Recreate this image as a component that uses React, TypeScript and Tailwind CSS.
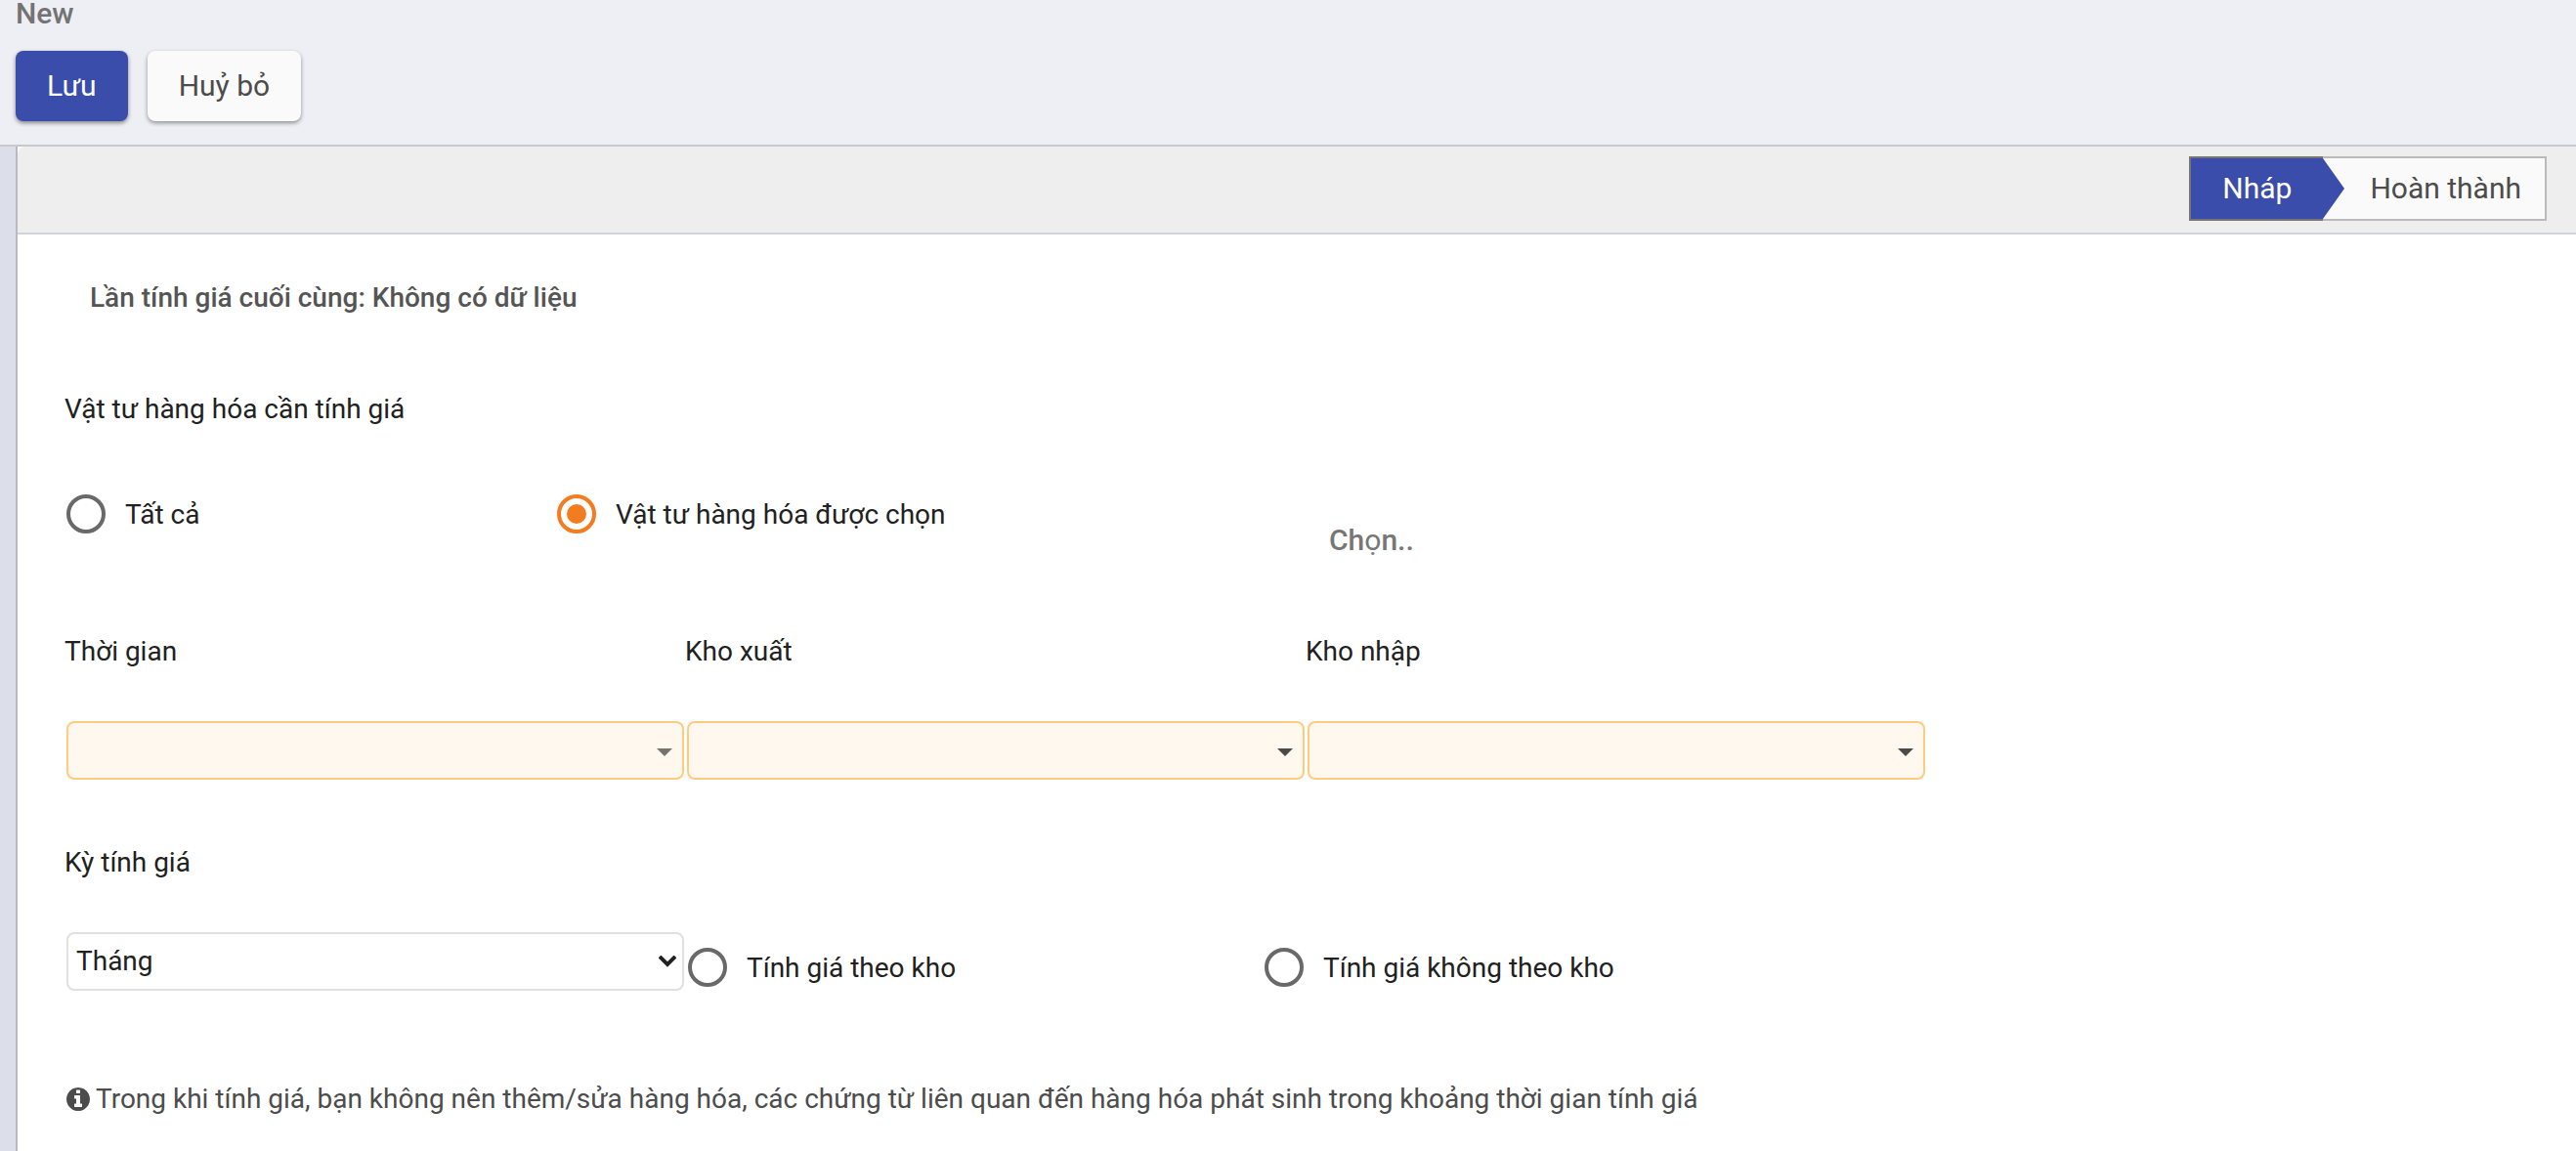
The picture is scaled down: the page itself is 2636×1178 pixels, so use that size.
import { useState } from "react";
import type { ReactNode } from "react";

type RadioProps = {
  name: string;
  label: string;
  checked: boolean;
  onSelect: () => void;
};

function Radio({ name, label, checked, onSelect }: RadioProps) {
  return (
    <label className="flex cursor-pointer items-center gap-5">
      <input
        type="radio"
        name={name}
        checked={checked}
        onChange={onSelect}
        className="grid size-10 shrink-0 appearance-none place-content-center rounded-full border-4 border-[#696969] before:size-5 before:rounded-full before:bg-transparent checked:border-[#f47c20] checked:before:bg-[#f47c20]"
      />
      <span className="pt-0.5">{label}</span>
    </label>
  );
}

type FieldProps = {
  id: string;
  label: string;
  children: ReactNode;
};

function Field({ id, label, children }: FieldProps) {
  return (
    <div>
      <label htmlFor={id} className="block">
        {label}
      </label>
      <div className="relative mt-[54px] mr-px ml-0.5">{children}</div>
    </div>
  );
}

function RequiredPicker({ id, label, muted }: { id: string; label: string; muted?: boolean }) {
  return (
    <Field id={id} label={label}>
      <input
        id={id}
        type="text"
        className="block h-15 w-full rounded-lg border-2 border-[#ffcb80] bg-[#fff8ee] pr-12 pl-2 outline-none"
      />
      <svg
        viewBox="0 0 16 8"
        aria-hidden="true"
        className={`pointer-events-none absolute right-3 bottom-6 h-2 w-4 ${muted ? "fill-[#77736e]" : "fill-[#4a4a48]"}`}
      >
        <path d="M0 0h16L8 8z" />
      </svg>
    </Field>
  );
}

function InfoIcon() {
  return (
    <svg viewBox="128 128 1536 1536" aria-hidden="true" className="size-6 shrink-0 fill-current">
      <path d="M1152 1376v-160q0-14-9-23t-23-9h-96v-512q0-14-9-23t-23-9h-320q-14 0-23 9t-9 23v160q0 14 9 23t23 9h96v320h-96q-14 0-23 9t-9 23v160q0 14 9 23t23 9h448q14 0 23-9t9-23zM1024 480v-160q0-14-9-23t-23-9h-192q-14 0-23 9t-9 23v160q0 14 9 23t23 9h192q14 0 23-9t9-23zM1664 896q0 209-103 385.500t-279.500 279.500-385.500 103-385.500-103-279.500-279.500-103-385.500 103-385.500 279.500-279.500 385.500-103 385.500 103 279.500 279.500 103 385.500z" />
    </svg>
  );
}

export default function App() {
  const [scope, setScope] = useState("selected");
  const [mode, setMode] = useState("");

  return (
    <div className="flex min-h-screen flex-col bg-[#dcdeea] font-['Roboto',sans-serif] text-[28px] leading-[34px] text-[#212121]">
      <header className="border-b-2 border-[#c8c9ce] bg-[#eeeff5] px-4 pb-6">
        <h1 className="text-[30px] leading-7 font-medium text-[#737373]">New</h1>
        <div className="mt-6 flex gap-5 text-[30px]">
          <button
            type="button"
            className="h-18 rounded-lg bg-[#3a4daa] px-8 text-white shadow-[0_2px_4px_rgba(0,0,0,0.45)]"
          >
            Lưu
          </button>
          <button
            type="button"
            className="h-18 rounded-lg bg-[#fafafa] px-8 text-[#4c4c4c] shadow-[0_2px_4px_rgba(0,0,0,0.4)]"
          >
            Huỷ bỏ
          </button>
        </div>
      </header>

      <main className="ml-4 grow border-l-2 border-[#b9b9c0] bg-white">
        <div className="flex justify-end rounded-tl-lg border-b-2 border-[#ced4da] bg-[#eeeeee] pt-2.5 pr-[30px] pb-3">
          <ol className="flex h-[66px] text-[30px]">
            <li
              aria-current="step"
              className="relative flex items-center border-y-2 border-l-2 border-[#757575] bg-[#3a4daa] px-8 text-white"
            >
              <span>Nháp</span>
              <svg
                viewBox="0 0 22 62"
                aria-hidden="true"
                className="absolute top-0 left-full h-full w-[22px] fill-[#3a4daa]"
              >
                <path d="M0 0l22 31L0 62z" />
              </svg>
            </li>
            <li className="flex items-center border-y-2 border-r-2 border-[#bababa] bg-[#fafafa] pr-6 pl-12 text-[#4c4c4c]">
              Hoàn thành
            </li>
          </ol>
        </div>

        <form className="pt-12 pr-[30px] pb-8 pl-12">
          <h2 className="pl-[26px] font-medium text-[#555555]">
            Lần tính giá cuối cùng: Không có dữ liệu
          </h2>

          <fieldset className="mt-20">
            <legend>Vật tư hàng hóa cần tính giá</legend>
            <div className="mt-[70px] flex items-start pl-0.5">
              <div className="w-[502px]">
                <Radio name="scope" label="Tất cả" checked={scope === "all"} onSelect={() => setScope("all")} />
              </div>
              <div className="w-[790px]">
                <Radio
                  name="scope"
                  label="Vật tư hàng hóa được chọn"
                  checked={scope === "selected"}
                  onSelect={() => setScope("selected")}
                />
              </div>
              <button type="button" className="mt-[30px] text-[30px] font-medium text-[#777777]">
                Ch<span className="font-normal">ọ</span>n..
              </button>
            </div>
          </fieldset>

          <div className="mt-20 grid grid-cols-4">
            <RequiredPicker id="period" label="Thời gian" muted />
            <RequiredPicker id="source" label="Kho xuất" />
            <RequiredPicker id="target" label="Kho nhập" />
          </div>

          <div className="mt-17 grid grid-cols-4">
            <Field id="cycle" label="Kỳ tính giá">
              <select
                id="cycle"
                defaultValue="month"
                className="block h-15 w-full appearance-none rounded-lg border-2 border-[#e0e0e0] bg-white pr-12 pl-2 outline-none"
              >
                <option value="month">Tháng</option>
                <option value="quarter">Quý</option>
                <option value="year">Năm</option>
              </select>
              <svg
                viewBox="0 0 18 12"
                aria-hidden="true"
                className="pointer-events-none absolute right-2 bottom-6 h-3 w-[18px] fill-none stroke-[#212121]"
              >
                <path d="M1 1l8 8 8-8" strokeWidth="4" />
              </svg>
            </Field>
            <div className="col-span-3 flex items-end pb-1 pl-[3px]">
              <div className="w-[590px]">
                <Radio
                  name="mode"
                  label="Tính giá theo kho"
                  checked={mode === "warehouse"}
                  onSelect={() => setMode("warehouse")}
                />
              </div>
              <Radio
                name="mode"
                label="Tính giá không theo kho"
                checked={mode === "global"}
                onSelect={() => setMode("global")}
              />
            </div>
          </div>

          <p className="mt-[94px] flex items-center gap-1.5 pl-0.5 text-[#4c4c4c]">
            <InfoIcon />
            Trong khi tính giá, bạn không nên thêm/sửa hàng hóa, các chứng từ liên quan đến hàng hóa phát sinh trong
            khoảng thời gian tính giá
          </p>
        </form>
      </main>
    </div>
  );
}
